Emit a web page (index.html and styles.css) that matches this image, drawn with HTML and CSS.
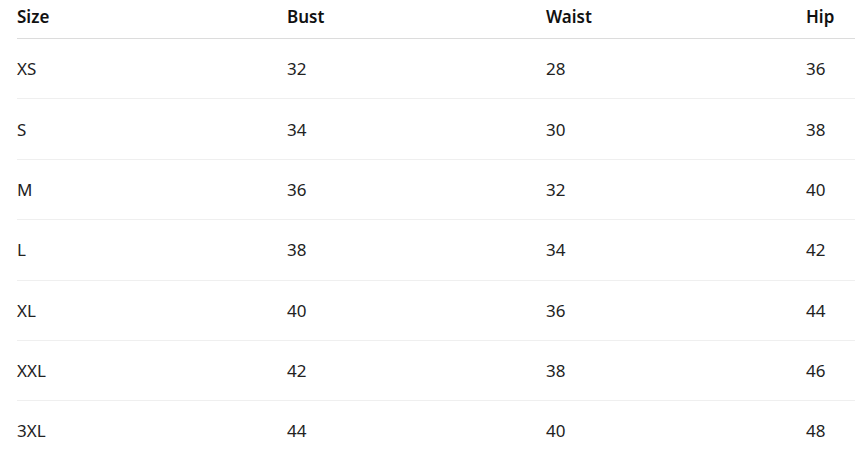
FILE: index.html
```html
<!DOCTYPE html>
<html>
<head>
<meta charset="utf-8">
<link rel="stylesheet" href="styles.css">
</head>
<body>
<div class="wrap">
<table class="size-table">
<thead>
<tr><th>Size</th><th>Bust</th><th>Waist</th><th>Hip</th></tr>
</thead>
<tbody>
<tr><td>XS</td><td>32</td><td>28</td><td>36</td></tr>
<tr><td>S</td><td>34</td><td>30</td><td>38</td></tr>
<tr><td>M</td><td>36</td><td>32</td><td>40</td></tr>
<tr><td>L</td><td>38</td><td>34</td><td>42</td></tr>
<tr><td>XL</td><td>40</td><td>36</td><td>44</td></tr>
<tr><td>XXL</td><td>42</td><td>38</td><td>46</td></tr>
<tr><td>3XL</td><td>44</td><td>40</td><td>48</td></tr>
</tbody>
</table>
</div>
</body>
</html>
```
FILE: styles.css
```css
html, body {
  margin: 0;
  padding: 0;
  background: #fff;
  overflow: hidden;
}
.wrap {
  padding-left: 17px;
}
.size-table {
  border-collapse: collapse;
  width: 838px;
  table-layout: fixed;
  font-family: "Noto Sans", "Open Sans", sans-serif;
  font-size: 17px;
  line-height: 24px;
  color: #222;
}
.size-table th:nth-child(1), .size-table td:nth-child(1) { width: 270px; }
.size-table th:nth-child(2), .size-table td:nth-child(2) { width: 259px; }
.size-table th:nth-child(3), .size-table td:nth-child(3) { width: 260px; }
.size-table th:nth-child(4), .size-table td:nth-child(4) { width: 49px; }
.size-table th {
  text-align: left;
  font-weight: 600;
  color: #111;
  padding: 5px 0 9px;
  border-bottom: 1px solid #dcdcdc;
  white-space: nowrap;
}
.size-table td {
  padding: 18.2px 0 17.2px;
  border-bottom: 1px solid #efefef;
  white-space: nowrap;
}
```
